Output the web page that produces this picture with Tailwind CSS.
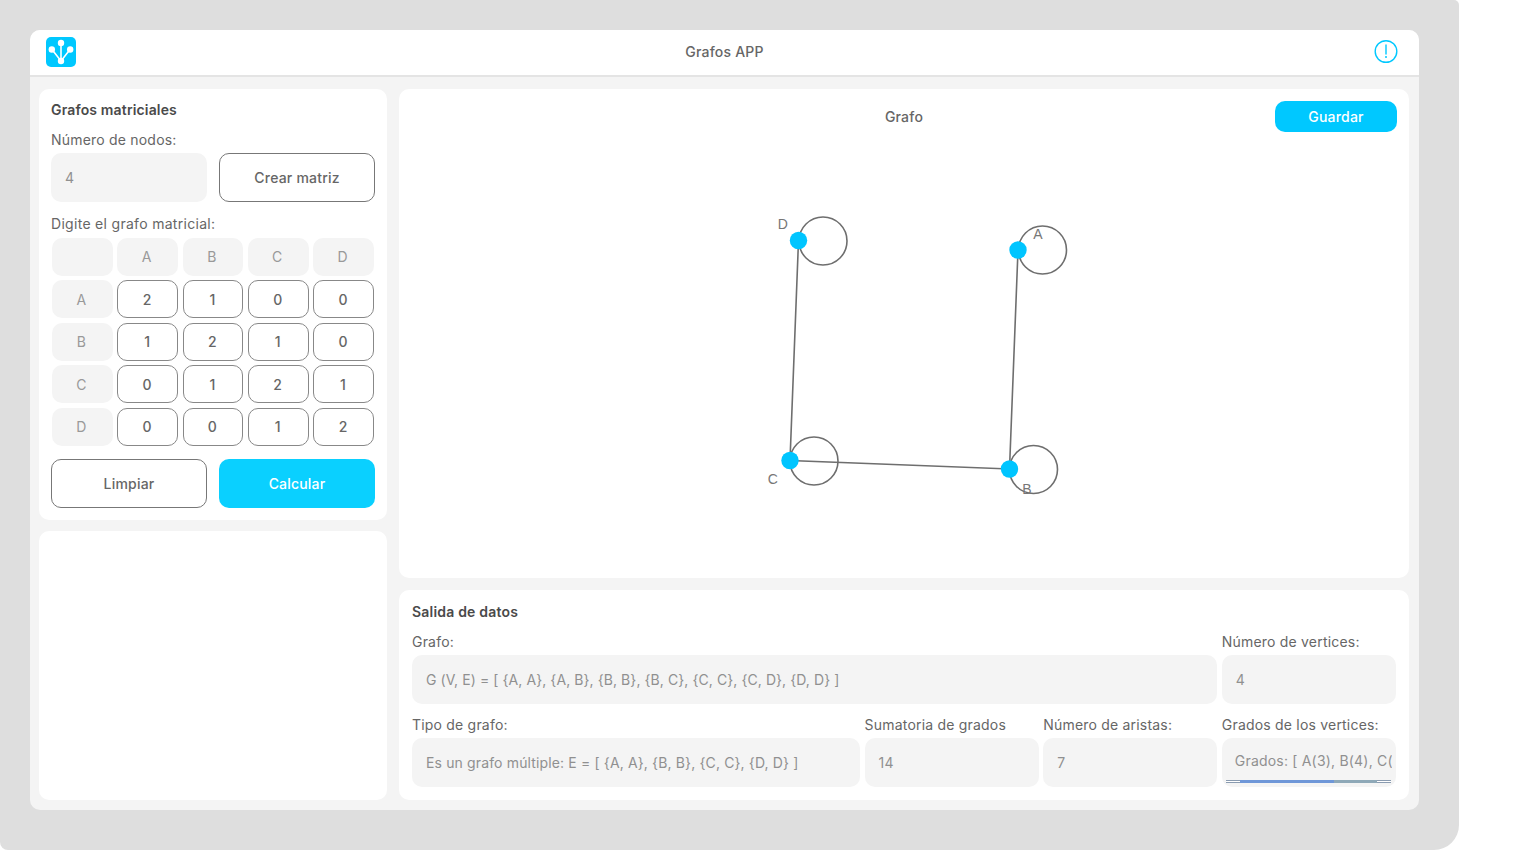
<!DOCTYPE html>
<html lang="en">
<head>
  <meta charset="UTF-8">
  <meta name="viewport" content="width=device-width, initial-scale=1.0">
  <title>Grafos APP</title>
  <script src="https://cdn.jsdelivr.net/npm/@tailwindcss/browser@4"></script>
</head>
<body class="bg-white font-['Inter',sans-serif] text-[14px] text-[#666] tracking-[0.2px]">
  <div class="w-[1459px] h-[850px] bg-[#dedede] rounded-br-[25px] rounded-tr-[5px] rounded-bl-[8px] pt-[30px] pl-[30px]">
    <div class="w-[1389px] h-[780px] bg-[#f4f4f4] rounded-[10px] overflow-hidden flex flex-col">

      <header class="h-[47px] shrink-0 bg-white border-b-2 border-[#e4e4e4] relative flex items-center justify-center">
        <svg class="absolute left-[16px] top-[7px]" width="30" height="30" viewBox="0 0 30 30">
          <rect width="30" height="30" rx="5" fill="#00c8ff"/>
          <g stroke="#fff" stroke-width="1.6" fill="none">
            <path d="M15 24 L15 6 M15 24 L6 12.5 M15 24 L24 12.5"/>
          </g>
          <g fill="#fff">
            <circle cx="15" cy="6" r="3.2"/><circle cx="5.8" cy="12.5" r="3.2"/><circle cx="24.2" cy="12.5" r="3.2"/><circle cx="15" cy="24" r="3.2"/>
          </g>
        </svg>
        <span class="font-medium text-[#666] mt-[-2px]">Grafos APP</span>
        <svg class="absolute left-[1344px] top-[10px]" width="24" height="24" viewBox="0 0 24 24" fill="none">
          <circle cx="12" cy="11.5" r="10.8" stroke="#00c8ff" stroke-width="1.4"/>
          <path d="M12 5 V14" stroke="#00c8ff" stroke-width="1.4" stroke-linecap="round"/>
          <circle cx="12" cy="17" r="1" fill="#00c8ff"/>
        </svg>
      </header>

      <main class="flex-1 flex gap-[12px] pt-[12px] pb-[10px] pl-[9px] pr-[10px] min-h-0">
        <!-- left column -->
        <div class="w-[348px] shrink-0 flex flex-col gap-[11px]">
          <section class="h-[431px] bg-white rounded-[10px] px-[12px] pt-[12px]">
            <h2 class="font-semibold text-[#4a4a4a] leading-[18px] tracking-[0.15px]">Grafos matriciales</h2>
            <p class="mt-[12px] leading-[18px]">Número de nodos:</p>
            <div class="mt-[4px] grid grid-cols-2 gap-[12px]">
              <div class="h-[49px] bg-[#f4f4f4] rounded-[10px] pl-[14px] flex items-center text-[#909090]">4</div>
              <div class="h-[49px] bg-white border border-[#777] rounded-[10px] flex items-center justify-center font-medium text-[#666]">Crear matriz</div>
            </div>
            <p class="mt-[13px] leading-[18px] tracking-[0.3px]">Digite el grafo matricial:</p>
            <div class="mt-[5px] mx-[1px] grid grid-cols-5 gap-x-[4.4px] gap-y-[4.45px] auto-rows-[38px]">
              <div class="bg-[#f4f4f4] rounded-[10px]"></div>
              <div class="bg-[#f4f4f4] rounded-[10px] flex items-center justify-center text-[#999] pr-[2px] pb-[1px]">A</div>
              <div class="bg-[#f4f4f4] rounded-[10px] flex items-center justify-center text-[#999] pr-[2px] pb-[1px]">B</div>
              <div class="bg-[#f4f4f4] rounded-[10px] flex items-center justify-center text-[#999] pr-[2px] pb-[1px]">C</div>
              <div class="bg-[#f4f4f4] rounded-[10px] flex items-center justify-center text-[#999] pr-[2px] pb-[1px]">D</div>

              <div class="bg-[#f4f4f4] rounded-[10px] flex items-center justify-center text-[#999] pr-[2px]">A</div>
              <div class="border border-[#888] rounded-[10px] flex items-center justify-center font-medium pr-[1px]">2</div>
              <div class="border border-[#888] rounded-[10px] flex items-center justify-center font-medium pr-[1px]">1</div>
              <div class="border border-[#888] rounded-[10px] flex items-center justify-center font-medium pr-[1px]">0</div>
              <div class="border border-[#888] rounded-[10px] flex items-center justify-center font-medium pr-[1px]">0</div>

              <div class="bg-[#f4f4f4] rounded-[10px] flex items-center justify-center text-[#999] pr-[2px]">B</div>
              <div class="border border-[#888] rounded-[10px] flex items-center justify-center font-medium pr-[1px]">1</div>
              <div class="border border-[#888] rounded-[10px] flex items-center justify-center font-medium pr-[1px]">2</div>
              <div class="border border-[#888] rounded-[10px] flex items-center justify-center font-medium pr-[1px]">1</div>
              <div class="border border-[#888] rounded-[10px] flex items-center justify-center font-medium pr-[1px]">0</div>

              <div class="bg-[#f4f4f4] rounded-[10px] flex items-center justify-center text-[#999] pr-[2px]">C</div>
              <div class="border border-[#888] rounded-[10px] flex items-center justify-center font-medium pr-[1px]">0</div>
              <div class="border border-[#888] rounded-[10px] flex items-center justify-center font-medium pr-[1px]">1</div>
              <div class="border border-[#888] rounded-[10px] flex items-center justify-center font-medium pr-[1px]">2</div>
              <div class="border border-[#888] rounded-[10px] flex items-center justify-center font-medium pr-[1px]">1</div>

              <div class="bg-[#f4f4f4] rounded-[10px] flex items-center justify-center text-[#999] pr-[2px]">D</div>
              <div class="border border-[#888] rounded-[10px] flex items-center justify-center font-medium pr-[1px]">0</div>
              <div class="border border-[#888] rounded-[10px] flex items-center justify-center font-medium pr-[1px]">0</div>
              <div class="border border-[#888] rounded-[10px] flex items-center justify-center font-medium pr-[1px]">1</div>
              <div class="border border-[#888] rounded-[10px] flex items-center justify-center font-medium pr-[1px]">2</div>
            </div>
            <div class="mt-[13px] grid grid-cols-2 gap-[12px]">
              <div class="h-[49px] bg-white border border-[#777] rounded-[10px] flex items-center justify-center font-medium">Limpiar</div>
              <div class="h-[49px] bg-[#0ad0ff] rounded-[10px] flex items-center justify-center font-medium text-white">Calcular</div>
            </div>
          </section>
          <section class="flex-1 bg-white rounded-[10px]"></section>
        </div>

        <!-- right column -->
        <div class="w-[1010px] shrink-0 flex flex-col gap-[12px]">
          <section class="h-[489px] bg-white rounded-[10px] relative">
            <div class="flex items-center h-[31px] mt-[12px] mr-[12px]">
              <span class="flex-1 text-center font-medium text-[#666] pl-[134px]">Grafo</span>
              <div class="w-[122px] h-[31px] bg-[#00c8ff] rounded-[10px] flex items-center justify-center font-medium text-white">Guardar</div>
            </div>
            <svg class="absolute left-0 top-0 pointer-events-none" width="1010" height="489" viewBox="399 89 1010 489" fill="none">
              <g stroke="#6e6e6e" stroke-width="1.6">
                <circle cx="823" cy="241" r="24"/>
                <circle cx="1042.5" cy="250" r="24"/>
                <circle cx="814" cy="461" r="24"/>
                <circle cx="1033.5" cy="469.5" r="24"/>
                <path d="M798.5 240.5 L790 460.5 L1009.5 469 L1018 250"/>
              </g>
              <g fill="#00c5ff">
                <circle cx="798.5" cy="240.5" r="8.7"/>
                <circle cx="1018" cy="250" r="8.7"/>
                <circle cx="790" cy="460.5" r="8.7"/>
                <circle cx="1009.5" cy="469" r="8.7"/>
              </g>
              <g fill="#777" font-size="14" font-family="'Liberation Sans',sans-serif" text-anchor="middle">
                <text x="783" y="228.5">D</text>
                <text x="1038" y="238.5">A</text>
                <text x="773" y="483.5">C</text>
                <text x="1027" y="493.5">B</text>
              </g>
            </svg>
          </section>

          <section class="flex-1 bg-white rounded-[10px] px-[13px] pt-[13px]">
            <h2 class="font-semibold text-[#4a4a4a] leading-[18px]">Salida de datos</h2>
            <div class="mt-[12px] grid grid-cols-[448px_174px_174px_174px] gap-x-[4.6px]">
              <div class="col-span-3">
                <p class="leading-[18px]">Grafo:</p>
                <div class="mt-[4px] h-[49px] bg-[#f4f4f4] rounded-[10px] pl-[14px] flex items-center text-[#909090] tracking-[0.08px]">G (V, E) = [ {A, A}, {A, B}, {B, B}, {B, C}, {C, C}, {C, D}, {D, D} ]</div>
              </div>
              <div>
                <p class="leading-[18px]">Número de vertices:</p>
                <div class="mt-[4px] h-[49px] bg-[#f4f4f4] rounded-[10px] pl-[14px] flex items-center text-[#909090]">4</div>
              </div>
              <div class="mt-[12px]">
                <p class="leading-[18px]">Tipo de grafo:</p>
                <div class="mt-[4px] h-[49px] bg-[#f4f4f4] rounded-[10px] pl-[14px] flex items-center text-[#909090] tracking-[0.14px]">Es un grafo múltiple: E = [ {A, A}, {B, B}, {C, C}, {D, D} ]</div>
              </div>
              <div class="mt-[12px]">
                <p class="leading-[18px]">Sumatoria de grados</p>
                <div class="mt-[4px] h-[49px] bg-[#f4f4f4] rounded-[10px] pl-[14px] flex items-center text-[#909090]">14</div>
              </div>
              <div class="mt-[12px]">
                <p class="leading-[18px]">Número de aristas:</p>
                <div class="mt-[4px] h-[49px] bg-[#f4f4f4] rounded-[10px] pl-[14px] flex items-center text-[#909090]">7</div>
              </div>
              <div class="mt-[12px]">
                <p class="leading-[18px]">Grados de los vertices:</p>
                <div class="mt-[4px] h-[49px] bg-[#f4f4f4] rounded-[10px] relative">
                  <div class="absolute left-[13px] top-[14px] w-[157px] overflow-hidden whitespace-nowrap leading-[18px] text-[#909090]">Grados: [ A(3), B(4), C(4), D(3) ]</div>
                  <div class="absolute left-[4px] right-[5px] top-[42px] h-[3px] border-y border-[#8a9bb0] bg-white">
                    <div class="absolute left-[14px] w-[94px] h-[3px] top-[-1px] bg-[#6f97d8]"></div>
                    <div class="absolute left-[108px] w-[43px] h-[3px] top-[-1px] bg-[#8fa9b8]"></div>
                  </div>
                </div>
              </div>
            </div>
          </section>
        </div>
      </main>
    </div>
  </div>
</body>
</html>
